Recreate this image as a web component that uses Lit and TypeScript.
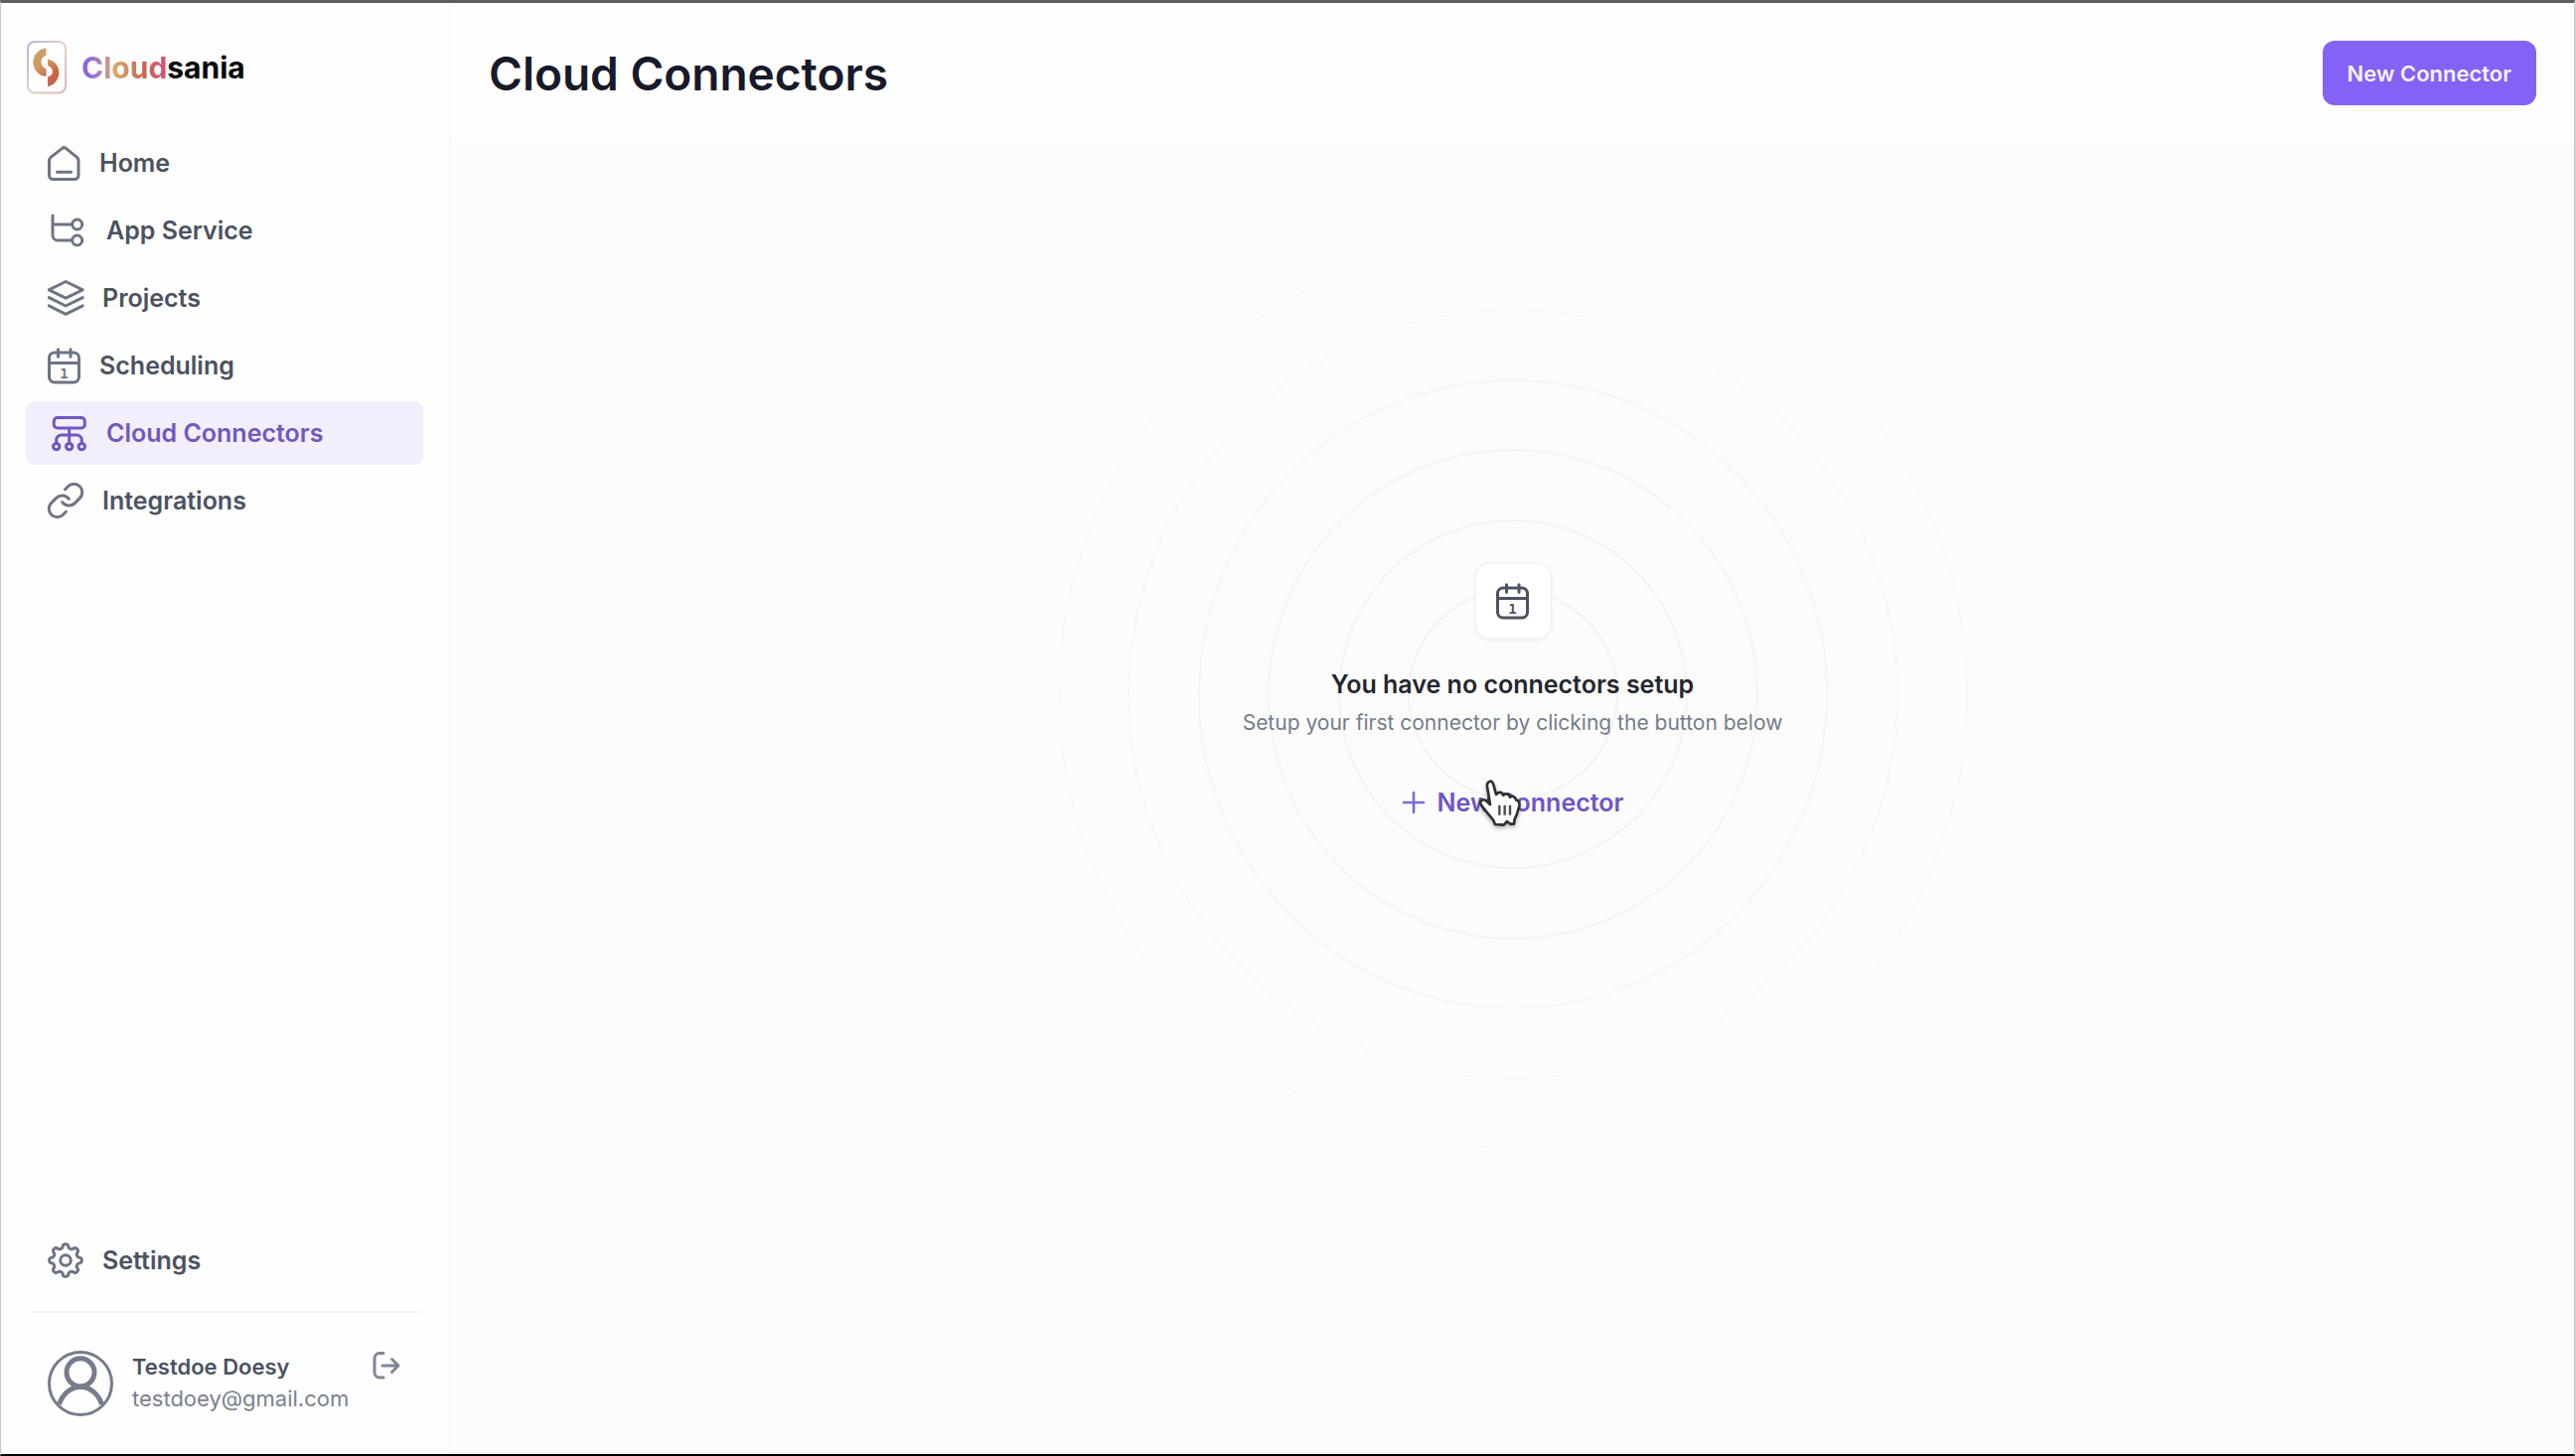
import { LitElement, html, svg, css, type SVGTemplateResult } from "lit";
import { customElement, property } from "lit/decorators.js";
import { classMap } from "lit/directives/class-map.js";

/** Closed outline of a gear with eight soft teeth, centred in a 40 unit box. */
function gearOutline(): string {
  const points: string[] = [];
  for (let i = 0; i < 160; i++) {
    const a = (i / 160) * Math.PI * 2;
    const r = 14.4 + 2 * Math.tanh(1.8 * Math.cos(8 * a));
    points.push(`${(20 + r * Math.cos(a)).toFixed(2)} ${(20 + r * Math.sin(a)).toFixed(2)}`);
  }
  return `M${points.join("L")}Z`;
}

type IconName = "home" | "branch" | "layers" | "calendar" | "network" | "link" | "gear";

const icons: Record<IconName, { size: number; art: SVGTemplateResult }> = {
  home: {
    size: 37,
    art: svg`<path d="M3.5 15.6a4 4 0 0 1 1.6-3.2L16.6 3.4a3 3 0 0 1 3.8 0L31.4 12.4a4 4 0 0 1 1.6 3.2V30.5a4 4 0 0 1-4 4H7.5a4 4 0 0 1-4-4Z"/><path d="M11.5 27.2h14"/>`,
  },
  branch: {
    size: 44,
    art: svg`<path d="M7 7v20a5 5 0 0 0 5 5h14.5M7 16h19.5"/><circle cx="31.7" cy="16" r="5"/><circle cx="31.7" cy="32" r="5"/>`,
  },
  layers: {
    size: 40,
    art: svg`<path d="M20.2 3.5 37.2 11.8 20.2 20.2 3.3 11.8Z"/><path d="M3.3 19.6l16.9 8.4 17-8.4"/><path d="M3.3 27.8l16.9 8.6 17-8.6"/>`,
  },
  calendar: {
    size: 37,
    art: svg`<rect x="3.5" y="5" width="30" height="30" rx="5.5"/><path d="M3.5 15.5h30M12.5 1.8v7.5M25 1.8v7.5"/><text x="18.5" y="30.5" text-anchor="middle">1</text>`,
  },
  network: {
    size: 44,
    art: svg`<rect x="8.3" y="6.5" width="31" height="10.5" rx="3.5"/><path d="M23.7 17v15M10.7 32v-3a5 5 0 0 1 5-5h15.6a5 5 0 0 1 5 5v3"/><circle cx="10.7" cy="35.6" r="3.2"/><circle cx="23.7" cy="35.6" r="3.2"/><circle cx="36.3" cy="35.6" r="3.2"/>`,
  },
  link: {
    size: 40,
    art: svg`<path d="M16.7 21.7a8.3 8.3 0 0 0 12.6.9l5-5a8.3 8.3 0 0 0-11.8-11.8l-2.9 2.9"/><path d="M23.3 18.3a8.3 8.3 0 0 0-12.6-.9l-5 5a8.3 8.3 0 0 0 11.8 11.8l2.9-2.9"/>`,
  },
  gear: {
    size: 40,
    art: svg`<path d=${gearOutline()} /><circle cx="20" cy="20" r="5.3"/>`,
  },
};

@customElement("line-icon")
class LineIcon extends LitElement {
  static styles = css`
    :host { display: block; flex: none; }
    svg {
      display: block;
      fill: none;
      stroke: currentColor;
      stroke-width: 3;
      stroke-linecap: round;
      stroke-linejoin: round;
    }
    text {
      fill: currentColor;
      stroke: none;
      font: 700 14px "DejaVu Sans Mono", monospace;
    }
  `;
  @property() name: IconName = "home";
  render() {
    const { size, art } = icons[this.name];
    return html`<svg width=${size} height=${size} viewBox="0 0 ${size} ${size}" aria-hidden="true">${art}</svg>`;
  }
}

@customElement("nav-link")
class NavLink extends LitElement {
  static styles = css`
    :host { display: block; }
    .link {
      display: flex;
      align-items: center;
      gap: 17px;
      height: 64px;
      padding: 0 20px;
      border-radius: 9px;
      color: #4b5261;
      font-size: 25px;
      font-weight: 600;
      text-decoration: none;
    }
    .icon { color: #6e7484; }
    .active { background: #f2eefc; color: #6f58bf; }
    .active .icon { color: #6f58bf; }
  `;
  @property() icon: IconName = "home";
  @property() label = "";
  @property({ type: Boolean }) active = false;
  render() {
    return html`<a
      href="#"
      class=${classMap({ link: true, active: this.active })}
      aria-current=${this.active ? "page" : "false"}
      ><line-icon class="icon" name=${this.icon}></line-icon><span>${this.label}</span></a
    >`;
  }
}

@customElement("brand-logo")
class BrandLogo extends LitElement {
  static styles = css`
    :host { display: block; }
    .brand { display: flex; align-items: center; gap: 15px; text-decoration: none; color: #050505; }
    .mark { display: block; flex: none; }
    .name { font-size: 30px; font-weight: 700; line-height: 52px; }
    .tint {
      background: linear-gradient(90deg, #8a68d8 8%, #b48aa8 26%, #d9a96c 38%, #cf8a5c 55%, #cb6450 74%, #d3527c 100%);
      -webkit-background-clip: text;
      background-clip: text;
      color: transparent;
    }
  `;
  render() {
    return html`<a class="brand" href="#">
      <svg class="mark" width="41" height="54" viewBox="0 0 41 54" aria-hidden="true">
        <defs>
          <linearGradient id="edge" x1="0" y1="0" x2="1" y2="1">
            <stop offset="0" stop-color="#b9b0e6" />
            <stop offset="0.5" stop-color="#e6d0c4" />
            <stop offset="1" stop-color="#dfb3b0" />
          </linearGradient>
          <linearGradient id="swirl" gradientUnits="userSpaceOnUse" x1="8" y1="8" x2="32" y2="46">
            <stop offset="0" stop-color="#c9a06c" />
            <stop offset="0.4" stop-color="#d09a60" />
            <stop offset="0.7" stop-color="#cc6446" />
            <stop offset="1" stop-color="#c9604f" />
          </linearGradient>
        </defs>
        <rect x="2" y="1" width="38" height="51.5" rx="7" fill="#fff" stroke="url(#edge)" stroke-width="2" />
        <path d="M20.5 7.5A14.3 14.3 0 0 0 20.5 36V28.5A7.8 7.8 0 0 1 15.5 21.5 6 6 0 0 1 20.5 15Z" fill="url(#swirl)" />
        <path d="M22 18.5A14 14 0 0 1 22 46V36.5A6 6 0 0 0 27 31 7.5 7.5 0 0 0 22 25Z" fill="url(#swirl)" />
      </svg>
      <span class="name"><span class="tint">Cloud</span>sania</span>
    </a>`;
  }
}

@customElement("side-bar")
class SideBar extends LitElement {
  static styles = css`
    :host {
      display: flex;
      flex-direction: column;
      box-sizing: border-box;
      padding: 38px 26px 38px 25px;
      border-right: 2px solid #f8f8f9;
      background: #fefefe;
    }
    .nav { display: flex; flex-direction: column; gap: 4px; margin-top: 37px; }
    .bottom { margin-top: auto; }
    .user {
      display: flex;
      align-items: flex-start;
      gap: 19px;
      margin-top: 19px;
      padding: 38px 22px 0;
      border-top: 2px solid #f6f6f8;
    }
    .avatar { display: block; flex: none; fill: none; stroke: #777c8d; stroke-width: 5; }
    .rim { stroke-width: 3; }
    .who { display: flex; flex-direction: column; font-size: 22px; line-height: 32px; }
    .name { color: #4b5261; font-weight: 600; }
    .mail { color: #7a8190; }
    .logout {
      display: block;
      margin: 0 0 0 auto;
      padding: 0;
      border: 0;
      background: none;
      color: #808695;
    }
    .logout svg {
      display: block;
      fill: none;
      stroke: currentColor;
      stroke-width: 3;
      stroke-linecap: round;
      stroke-linejoin: round;
    }
  `;
  render() {
    const links: { icon: IconName; label: string }[] = [
      { icon: "home", label: "Home" },
      { icon: "branch", label: "App Service" },
      { icon: "layers", label: "Projects" },
      { icon: "calendar", label: "Scheduling" },
      { icon: "network", label: "Cloud Connectors" },
      { icon: "link", label: "Integrations" },
    ];
    return html`
      <brand-logo></brand-logo>
      <nav class="nav">
        ${links.map(
          (l) => html`<nav-link icon=${l.icon} label=${l.label} ?active=${l.label === "Cloud Connectors"}></nav-link>`
        )}
      </nav>
      <div class="bottom">
        <nav-link icon="gear" label="Settings"></nav-link>
        <div class="user">
          <svg class="avatar" width="66" height="66" viewBox="0 0 66 66" aria-hidden="true">
            <circle class="rim" cx="33" cy="33" r="31.5" />
            <circle cx="33" cy="21.8" r="14" />
            <path d="M11.5 54C15 43.5 23 36.5 33 36.5S51 43.5 54.5 54" />
          </svg>
          <div class="who"><span class="name">Testdoe Doesy</span><span class="mail">testdoey@gmail.com</span></div>
          <button class="logout" aria-label="Log out">
            <svg width="30" height="30" viewBox="0 0 30 30">
              <path d="M12 2.5H8a5 5 0 0 0-5 5v14.5a5 5 0 0 0 5 5h4M11 15h16M20.5 8.5 27 15l-6.5 6.5" />
            </svg>
          </button>
        </div>
      </div>
    `;
  }
}

@customElement("empty-state")
class EmptyState extends LitElement {
  static styles = css`
    :host { display: grid; justify-items: center; align-content: start; background: #fcfcfd; overflow: hidden; }
    .rings, .body { grid-area: 1 / 1; }
    .rings { display: block; margin-top: 95px; fill: none; stroke-width: 2; }
    .body { display: flex; flex-direction: column; align-items: center; margin-top: 422px; text-align: center; }
    .tile {
      display: grid;
      place-items: center;
      box-sizing: border-box;
      width: 78px;
      height: 78px;
      border: 2px solid #f3f3f6;
      border-radius: 15px;
      background: #fff;
      box-shadow: 0 2px 3px #1018280a;
      color: #4d5263;
    }
    .title { margin: 26px 0 0; color: #24262e; font-size: 25px; font-weight: 600; line-height: 38px; }
    .hint { margin: 0; color: #757c8b; font-size: 21px; font-weight: 400; line-height: 40px; }
    .action {
      position: relative;
      display: flex;
      align-items: center;
      gap: 12px;
      height: 65px;
      margin: 27px 0 0;
      padding: 0;
      border: 0;
      background: none;
      color: #6f55c4;
      font-family: inherit;
      font-size: 25px;
      font-weight: 600;
    }
    .plus { display: block; fill: none; stroke: #8068d8; stroke-width: 2.6; stroke-linecap: round; }
    .pointer { position: absolute; left: 77px; top: 9px; pointer-events: none; overflow: visible; filter: drop-shadow(0 2px 2px #0000004d); }
  `;
  render() {
    const rings = [
      [105, "#f3f3f5"],
      [175, "#f4f4f6"],
      [246, "#f5f5f7"],
      [316, "#f6f6f8"],
      [387, "#f8f8f9"],
      [457, "#fafafb"],
    ] as const;
    return html`
      <svg class="rings" width="920" height="920" viewBox="0 0 920 920" aria-hidden="true">
        ${rings.map(([r, tone]) => svg`<circle cx="460" cy="460" r=${r} stroke=${tone} />`)}
      </svg>
      <div class="body">
        <div class="tile"><line-icon name="calendar"></line-icon></div>
        <h2 class="title">You have no connectors setup</h2>
        <p class="hint">Setup your first connector by clicking the button below</p>
        <button class="action">
          <svg class="plus" width="24" height="24" viewBox="0 0 24 24" aria-hidden="true"><path d="M12 2v20M2 12h20" /></svg>
          <span>New Connector</span>
          <svg class="pointer" width="43" height="50" viewBox="0 0 129 150" aria-hidden="true">
            <path
              d="M27 24C25 9 38 3 44 13C48 22 50 34 54 48C60 38 72 40 76 50C82 43 93 46 96 56C103 50 112 55 114 64C122 65 127 74 123 86L117 106C115 114 110 118 109 128L108 137L97 137L87 129L77 140L51 138L46 126C38 114 18 94 8 78C3 68 14 60 23 66L36 78Z"
              fill="#fff" stroke="#303033" stroke-width="8" stroke-linejoin="round"
            />
            <path d="M64 80v30M80 80v30M96 80v30" stroke="#4a4a4e" stroke-width="7" />
          </svg>
        </button>
      </div>
    `;
  }
}

@customElement("app-root")
class AppRoot extends LitElement {
  static styles = css`
    :host {
      display: flex;
      box-sizing: border-box;
      min-height: 100vh;
      border: 1px solid #c9c9cb;
      border-top: 3px solid #625d5f;
      border-bottom: 2px solid #000;
      background: #fefefe;
      font-family: Inter, "Liberation Sans", sans-serif;
    }
    .side { flex: 0 0 453px; }
    .main { display: flex; flex: 1; flex-direction: column; min-width: 0; }
    .header { display: flex; align-items: center; justify-content: space-between; padding: 38px; }
    .title { margin: 0; color: #171a2b; font-size: 46px; font-weight: 600; line-height: 64px; }
    .primary {
      height: 65px;
      padding: 0 25px;
      border: 0;
      border-radius: 12px;
      background: #8462f5;
      color: #f6f1ff;
      font-family: inherit;
      font-size: 22px;
      font-weight: 600;
    }
    .content { flex: 1; }
  `;
  render() {
    return html`
      <side-bar class="side"></side-bar>
      <main class="main">
        <header class="header">
          <h1 class="title">Cloud Connectors</h1>
          <button class="primary">New Connector</button>
        </header>
        <empty-state class="content"></empty-state>
      </main>
    `;
  }
}
